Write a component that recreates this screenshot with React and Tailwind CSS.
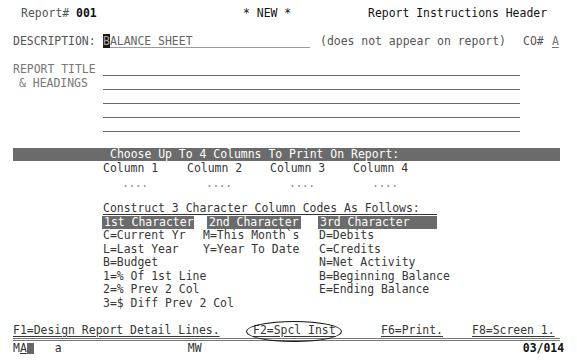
import React from "react";

const Row = ({ children, className = "" }) => (
  <div className={"flex h-[14px] items-center whitespace-pre " + className}>{children}</div>
);
const Row2 = ({ children, className = "" }) => (
  <div className={"flex h-[13.5px] items-center whitespace-pre " + className}>{children}</div>
);

const Field = ({ className = "", children }) => (
  <span className={"inline-block shrink-0 h-[12px] leading-[11px] border-b border-[#6a6a6a] " + className}>
    {children}
  </span>
);

const Bar = "shrink-0 h-[13px] leading-[13px] bg-[#6b6b6b] text-white";

export default function App() {
  return (
    <div
      className="relative w-[577px] h-[362px] overflow-hidden bg-white text-[#363636] text-[11.45px]"
      style={{ fontFamily: '"DejaVu Sans Mono", "Liberation Mono", monospace' }}
    >
      <div className="pt-[7px]">
        {/* row 0 */}
        <Row>
          <span className="w-[21px] shrink-0" />
          <span className="w-[55px] shrink-0 text-[#555]">Report#</span>
          <span className="w-[167px] shrink-0 font-bold text-[#111]">001</span>
          <span className="w-[125px] shrink-0 text-[#111]">* NEW *</span>
          <span className="text-[#111]">Report Instructions Header</span>
        </Row>
        <Row />
        {/* row 2 */}
        <Row>
          <span className="w-[13px] shrink-0" />
          <span className="w-[90px] shrink-0 text-[#555]">DESCRIPTION:</span>
          <Field className="w-[207px] border-[#9a9a9a] text-[#666]">
            <span className="bg-[#1a1a1a] text-[#aaa]">B</span>ALANCE SHEET
          </Field>
          <span className="w-[10px] shrink-0" />
          <span className="w-[203px] shrink-0 text-[#555]">(does not appear on report)</span>
          <span className="w-[29px] shrink-0 text-[#555]">CO#</span>
          <span className="text-[#777] underline underline-offset-2">A</span>
        </Row>
        <Row />
        {/* rows 4-8 */}
        <Row>
          <span className="w-[13px] shrink-0" />
          <span className="w-[90px] shrink-0 text-[#777]">REPORT TITLE</span>
          <Field className="w-[417px]" />
        </Row>
        <Row>
          <span className="w-[19px] shrink-0" />
          <span className="w-[84px] shrink-0 text-[#777]">& HEADINGS</span>
          <Field className="w-[417px]" />
        </Row>
        <Row>
          <span className="w-[103px] shrink-0" />
          <Field className="w-[417px]" />
        </Row>
        <Row>
          <span className="w-[103px] shrink-0" />
          <Field className="w-[417px]" />
        </Row>
        <Row>
          <span className="w-[103px] shrink-0" />
          <Field className="w-[417px]" />
        </Row>
        <Row />
      </div>
      <div className="pt-[1px]">
        {/* row 10 bar */}
        <Row2>
          <span className="w-[13px] shrink-0" />
          <span className={"w-[547px] pl-[97px] " + Bar}>Choose Up To 4 Columns To Print On Report:</span>
        </Row2>
        {/* row 11 */}
        <Row2>
          <span className="w-[103px] shrink-0" />
          <span className="w-[84px] shrink-0">Column 1</span>
          <span className="w-[83px] shrink-0">Column 2</span>
          <span className="w-[83px] shrink-0">Column 3</span>
          <span>Column 4</span>
        </Row2>
        {/* row 12 dots */}
        <Row2 className="pt-[4px] text-[#888] tracking-[-0.5px]">
          <span className="w-[122px] shrink-0" />
          <span className="w-[84px] shrink-0">....</span>
          <span className="w-[83px] shrink-0">....</span>
          <span className="w-[83px] shrink-0">....</span>
          <span>....</span>
        </Row2>
        <Row2 />
        {/* row 14 */}
        <Row2>
          <span className="w-[103px] shrink-0" />
          <span className="w-[334px] shrink-0 border-b border-[#333] h-[12px] leading-[11px]">Construct 3 Character Column Codes As Follows:</span>
        </Row2>
        {/* row 15 */}
        <Row2 className="items-end">
          <span className="w-[102px] shrink-0" />
          <span className={"w-[92px] pl-[2px] " + Bar}>1st Character</span>
          <span className="w-[13px] shrink-0" />
          <span className={"w-[94px] pl-[2px] " + Bar}>2nd Character</span>
          <span className="w-[17px] shrink-0" />
          <span className={"w-[119px] pl-[2px] " + Bar}>3rd Character</span>
        </Row2>
        <Row2>
          <span className="w-[103px] shrink-0" />
          <span className="w-[100px] shrink-0">C=Current Yr</span>
          <span className="w-[116px] shrink-0">M=This Month`s</span>
          <span>D=Debits</span>
        </Row2>
        <Row2>
          <span className="w-[103px] shrink-0" />
          <span className="w-[100px] shrink-0">L=Last Year</span>
          <span className="w-[116px] shrink-0">Y=Year To Date</span>
          <span>C=Credits</span>
        </Row2>
        <Row2>
          <span className="w-[103px] shrink-0" />
          <span className="w-[216px] shrink-0">B=Budget</span>
          <span>N=Net Activity</span>
        </Row2>
        <Row2>
          <span className="w-[103px] shrink-0" />
          <span className="w-[216px] shrink-0">1=% Of 1st Line</span>
          <span>B=Beginning Balance</span>
        </Row2>
        <Row2>
          <span className="w-[103px] shrink-0" />
          <span className="w-[216px] shrink-0">2=% Prev 2 Col</span>
          <span>E=Ending Balance</span>
        </Row2>
        <Row2>
          <span className="w-[103px] shrink-0" />
          <span>3=$ Diff Prev 2 Col</span>
        </Row2>
        <Row2 />
        {/* row 23 */}
        <Row2>
          <span className="w-[13px] shrink-0" />
          <span className="w-[240px] shrink-0 underline underline-offset-2">F1=Design Report Detail Lines.</span>
          <span className="w-[128px] shrink-0 underline underline-offset-2">F2=Spcl Inst</span>
          <span className="w-[91px] shrink-0 underline underline-offset-2">F6=Print.</span>
          <span className="underline underline-offset-2">F8=Screen 1.</span>
        </Row2>
      </div>
      <div className="ml-[13px] w-[547px] h-[3px] border-t border-b border-[#777] mt-[1px]" />
      <div className="flex h-[15px] items-center whitespace-pre text-[#333]">
        <span className="w-[13px] shrink-0" />
        <span>M</span>
        <span className="underline underline-offset-1">A</span>
        <span className="inline-block shrink-0 w-[7px] h-[11px] bg-[#666]" />
        <span className="w-[21px] shrink-0" />
        <span className="w-[133px] shrink-0">a</span>
        <span className="w-[335px] shrink-0">MW</span>
        <span className="font-bold text-[#111]">03/014</span>
      </div>
      <div className="absolute left-[246px] top-[321px] w-[96px] h-[21px] rounded-[50%] border border-[#111]" />
    </div>
  );
}
